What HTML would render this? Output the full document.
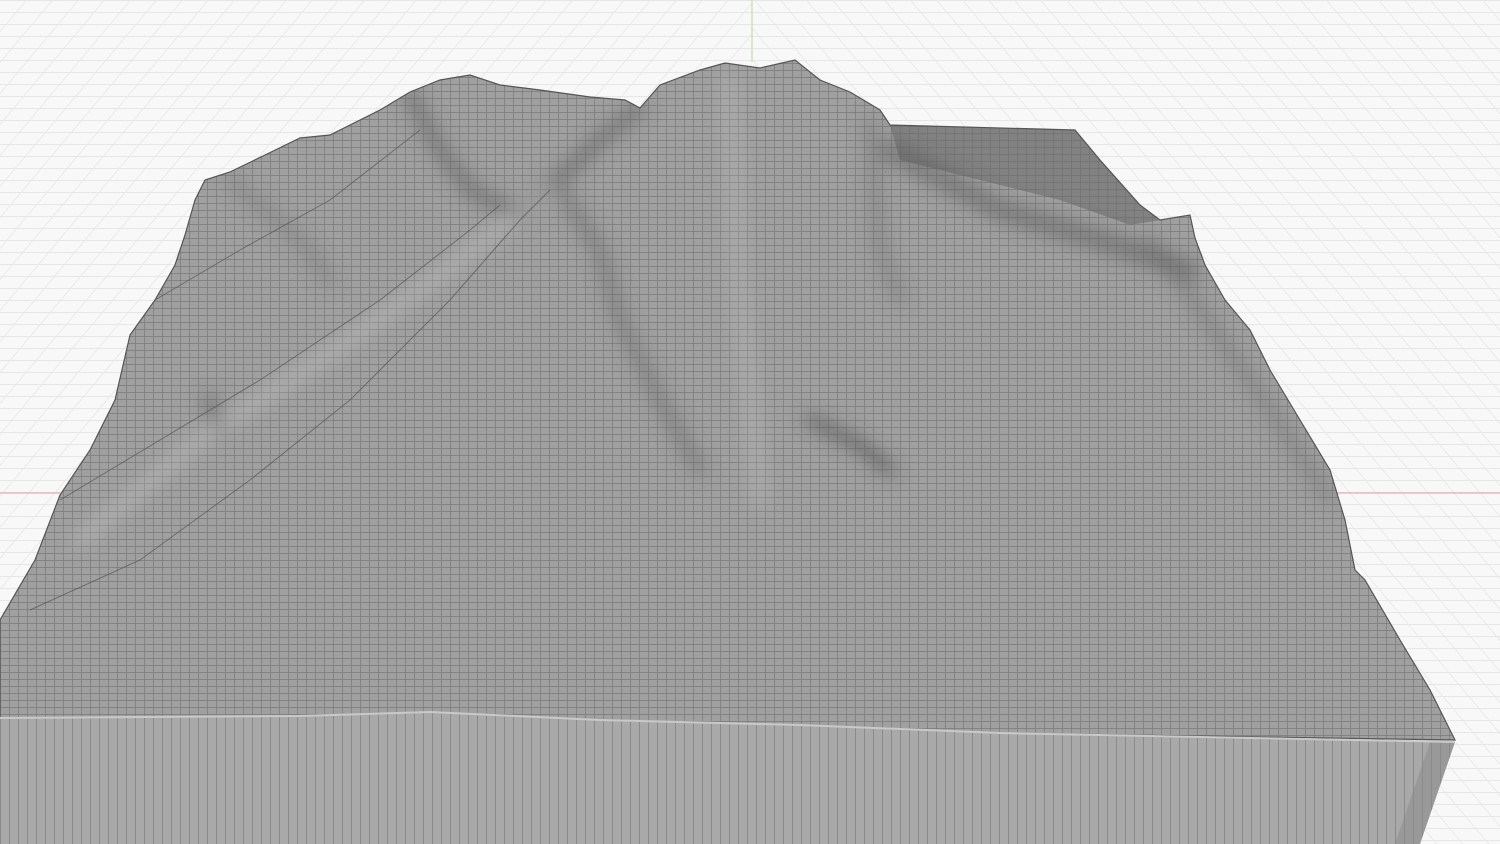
<!DOCTYPE html>
<html><head><meta charset="utf-8"><style>html,body{margin:0;padding:0;background:#f8f8f8;overflow:hidden}svg{display:block}</style></head><body>
<svg width="1500" height="844" viewBox="0 0 1500 844" xmlns="http://www.w3.org/2000/svg">
<defs>
<pattern id="bgR" width="26" height="12" patternUnits="userSpaceOnUse" patternTransform="skewX(40)"><path d="M0 .5H26M.5 0V12" stroke="#e6e6e6" stroke-width="1"/></pattern>
<pattern id="bgL" width="26" height="12" patternUnits="userSpaceOnUse" patternTransform="skewX(-40)"><path d="M0 .5H26M.5 0V12" stroke="#e6e6e6" stroke-width="1"/></pattern>
<pattern id="g" width="9" height="7" patternUnits="userSpaceOnUse"><rect width="9" height="7" fill="#a0a0a0"/><path d="M0 .5H9M.5 0V7" stroke="#7a7a7a" stroke-width="0.7"/></pattern>
<pattern id="v" width="9" height="10" patternUnits="userSpaceOnUse"><rect width="9" height="10" fill="#a9a9a9"/><path d="M.5 0V10" stroke="#878787" stroke-width="0.9"/></pattern>
<filter id="b"><feGaussianBlur stdDeviation="9"/></filter>
<clipPath id="tc"><path id="top" d="M0 722L0 620L35 560L60 495L90 450L115 400L130 335L155 300L175 265L185 235L195 200L205 180L230 172L265 155L300 138L330 135L380 110L410 92L440 80L470 75L500 85L540 90L590 97L625 100L640 108L660 85L700 70L725 63L760 68L795 60L820 80L850 92L880 110L890 125L1075 130L1100 160L1140 205L1160 220L1190 215L1195 238L1205 265L1225 300L1250 330L1270 370L1300 420L1330 470L1345 520L1355 570L1365 580L1400 640L1430 690L1455 740L1000 733L800 725L600 720L430 712L300 716Z"/></clipPath>
</defs>
<rect x="0" y="0" width="752" height="844" fill="url(#bgL)"/>
<rect x="752" y="0" width="748" height="844" fill="url(#bgR)"/>
<line x1="752" y1="0" x2="752" y2="62" stroke="#b8d89a" stroke-width="1"/>
<line x1="0" y1="493" x2="60" y2="493" stroke="#e2a0a8" stroke-width="1"/>
<line x1="1335" y1="493" x2="1500" y2="493" stroke="#e2a0a8" stroke-width="1"/>
<use href="#top" fill="url(#g)"/>
<g clip-path="url(#tc)">
<path d="M890 125L1075 130L1100 160L1140 205L1160 220L1130 225L1060 200L980 180L900 160Z" fill="#6a6a6a" opacity=".55"/>
</g>
<g clip-path="url(#tc)" filter="url(#b)" fill="none" stroke-linecap="round">
<path d="M410 95L440 150L470 190L520 215L600 140L640 108" stroke="#5a5a5a" stroke-width="14" opacity=".55"/>
<path d="M560 190L600 250L620 320L660 400L700 470" stroke="#5c5c5c" stroke-width="12" opacity=".5"/>
<path d="M890 150L1000 210L1100 240L1190 270" stroke="#555" stroke-width="22" opacity=".45"/>
<path d="M810 420L860 445L890 470" stroke="#444" stroke-width="12" opacity=".6"/>
<path d="M230 180L300 240L330 280" stroke="#5f5f5f" stroke-width="10" opacity=".4"/>
<path d="M210 400L220 430" stroke="#505050" stroke-width="14" opacity=".5"/>
<path d="M550 190L460 260L350 340L200 440L80 540" stroke="#c4c4c4" stroke-width="12" opacity=".5"/>
<path d="M730 80L740 300L760 500" stroke="#c2c2c2" stroke-width="16" opacity=".35"/>
<path d="M870 120L880 250L900 300" stroke="#5a5a5a" stroke-width="10" opacity=".4"/>
<path d="M1150 240L1250 380L1330 500" stroke="#606060" stroke-width="14" opacity=".35"/>
</g>
<g clip-path="url(#tc)" fill="none" stroke="#555" stroke-width="1" opacity=".7">
<path d="M155 300L240 250L330 200L420 130"/>
<path d="M60 500L160 440L260 380L380 300L470 230L500 205"/>
<path d="M30 610L140 560L250 480L350 400L450 300L520 220L550 190"/>
</g>
<use href="#top" fill="none" stroke="#555" stroke-width="1.2"/>
<path d="M0 718L300 716L430 712L600 720L800 725L1000 733L1455 742L1420 844L0 844Z" fill="url(#v)"/>
<path d="M1430 742L1455 742L1420 844L1395 844Z" fill="#8a8a8a" opacity=".5"/>
<path d="M0 718L300 716L430 712L600 720L800 725L1000 733L1455 742" fill="none" stroke="#c9c9c9" stroke-width="2"/>
</svg>
</body></html>
